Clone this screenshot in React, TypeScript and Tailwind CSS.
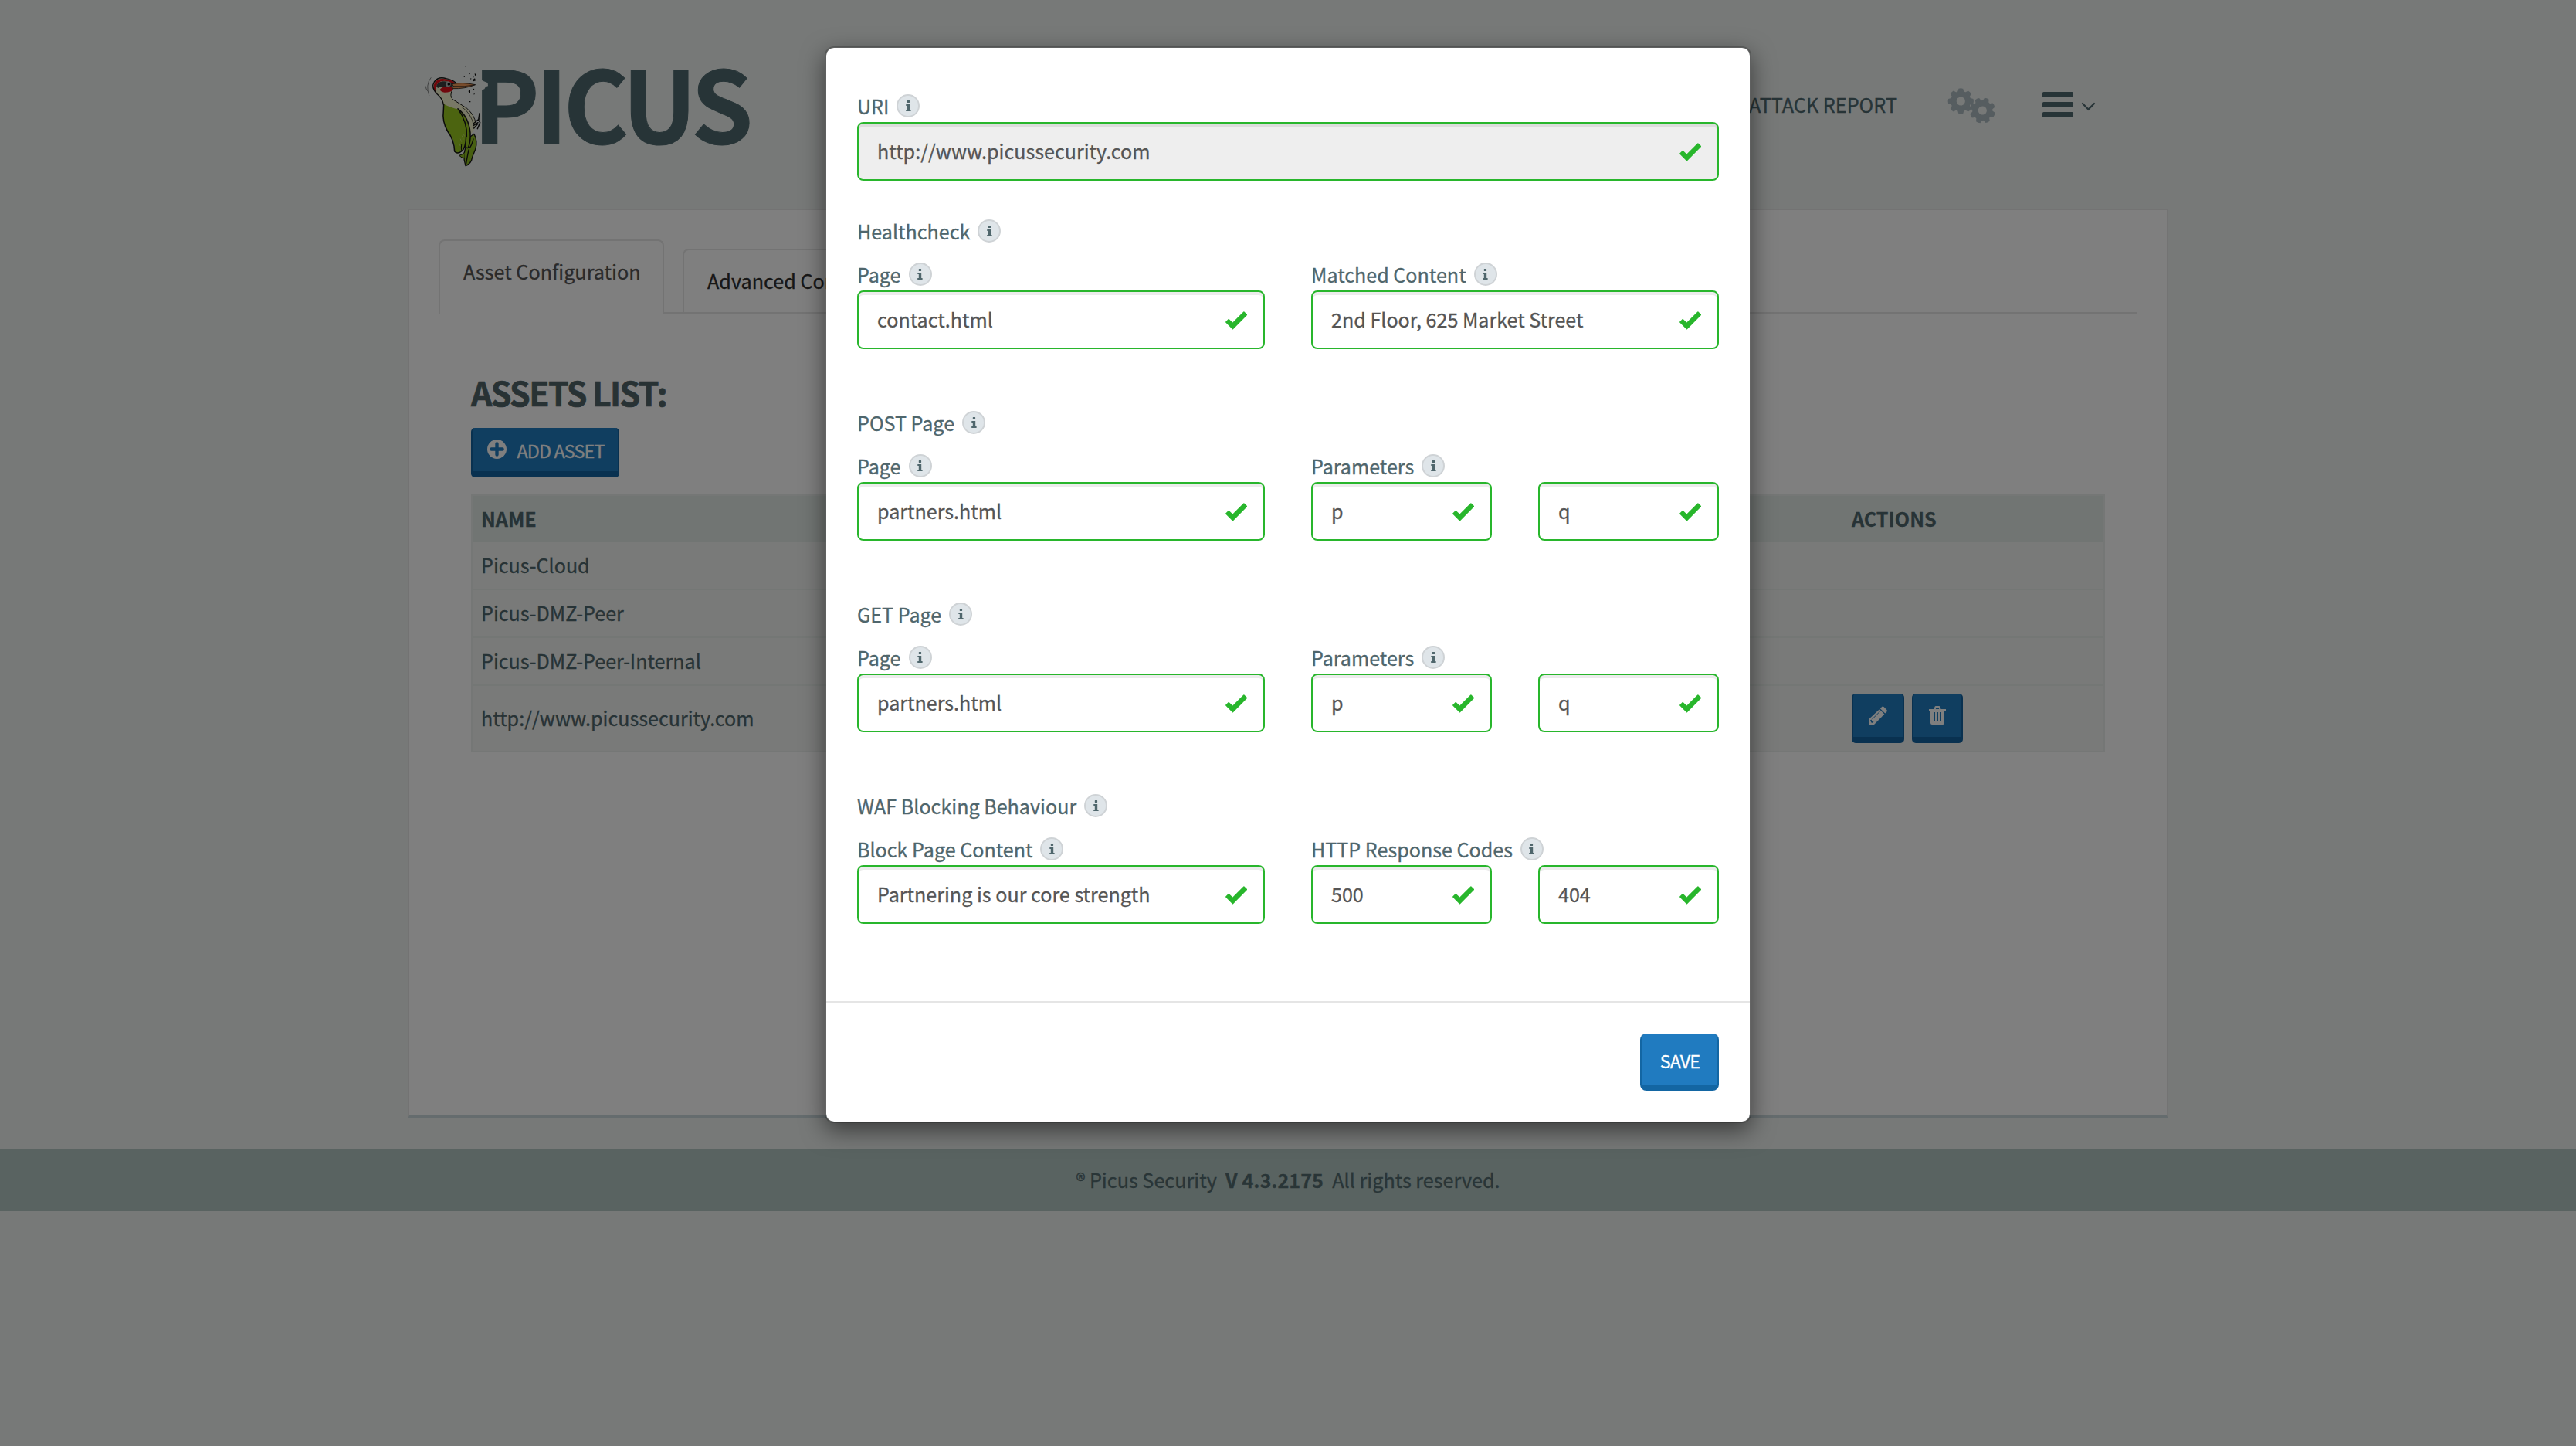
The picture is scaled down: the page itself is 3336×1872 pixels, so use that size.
import type { ReactNode } from 'react';

const GEAR_TEETH = [0, 45, 90, 135, 180, 225, 270, 315];

function Gear({ cx, cy, turn }: { cx: number; cy: number; turn: number }) {
  return (
    <g transform={`translate(${cx} ${cy}) rotate(${turn})`}>
      <circle r="9.3" fill="none" stroke="currentColor" strokeWidth="7.4" />
      {GEAR_TEETH.map((a) => (
        <path key={a} d="M-4.2 -11.5 L-2.9 -16.2 Q0 -17.1 2.9 -16.2 L4.2 -11.5 Z" fill="currentColor" transform={`rotate(${a})`} />
      ))}
    </g>
  );
}

function Woodpecker() {
  return (
    <svg viewBox="0 0 270 420" className="absolute top-0 left-0 h-[140px] w-[90px]" strokeLinecap="round" strokeLinejoin="round">
      <path d="M230 70 L234 70 L245 76 L260 82 L261 94 L252 97 L247 106 L239 109 L233 116 L228 116 Z" fill="#eef2f0" />
      <path d="M39 62 Q17 90 32 130 M19 96 Q20 106 25 112" fill="none" stroke="#222" strokeWidth="1.6" />
      <path d="M207 280 Q222 310 212 340 L200 370 Q196 396 174 404 Q166 380 168 358 L180 300 Z" fill="#8fbe22" stroke="#141414" strokeWidth="4" />
      <path d="M170 352 Q160 362 149 364 Q158 374 169 374" fill="#8fbe22" stroke="#141414" strokeWidth="3" />
      <path d="M188 335 Q196 330 204 300 M186 342 Q180 370 176 395" fill="none" stroke="#141414" strokeWidth="4" />
      <path d="M60 116 Q84 140 88 162 L92 178 Q140 186 164 210 Q186 240 192 282 Q208 270 214 244 Q208 205 178 180 Q150 162 124 146 Q112 132 122 112 L104 70 L62 84 Z" fill="#f2f2cc" />
      <path d="M214 240 Q208 205 178 180 Q150 162 124 146 Q110 132 122 110" fill="none" stroke="#141414" strokeWidth="3" />
      <path d="M160 176 Q196 200 206 248" fill="none" stroke="#141414" strokeWidth="2" />
      <path d="M89 164 Q120 180 146 184 Q178 206 190 262 Q196 300 186 334 Q174 334 176 306 Q172 336 158 348 Q142 362 131 350 Q134 320 122 298 Q94 262 86 220 Z" fill="#98c820" />
      <path d="M89 164 L88 188 Q82 232 104 270 Q130 304 131 348 Q142 360 158 348 Q174 336 176 290 M146 184 Q186 214 192 276 Q194 310 184 334 Q172 338 174 316 M144 182 Q182 236 178 292" fill="none" stroke="#141414" strokeWidth="4.5" />
      <path d="M158 346 Q156 332 158 322" fill="none" stroke="#141414" strokeWidth="3" />
      <path d="M154 300 L158 310 M160 288 L165 300 M150 318 L153 326 M166 280 L169 288" fill="none" stroke="#dbe89a" strokeWidth="1.6" />
      <path d="M88 166 Q84 142 66 128 Q42 100 50 82 Q64 58 96 66 Q122 70 134 84 L122 100 Q108 112 92 106 Q76 104 62 92 Q58 104 68 124 Z" fill="#f2f2cc" />
      <path d="M58 122 Q44 98 54 80 Q66 62 96 67 Q120 70 134 82 L124 84 Q100 70 78 76 Q58 84 58 108 Z" fill="#e01018" />
      <path d="M60 94 Q66 78 84 76 Q108 74 126 84 L122 96 L100 98 Q80 92 66 102 Z" fill="#3c3c3c" />
      <path d="M74 108 Q82 96 104 98 Q124 96 126 108 Q118 119 92 119 Q78 118 74 108 Z" fill="#e01018" />
      <circle cx="106" cy="87" r="10" fill="#b8b8b8" />
      <circle cx="109" cy="87" r="5.5" fill="#0a0a0a" />
      <path d="M122 86 Q160 78 212 89 Q170 106 122 104 Q130 94 122 86 Z" fill="#f09858" stroke="#141414" strokeWidth="2.4" />
      <path d="M126 95 Q170 98 208 90" fill="none" stroke="#141414" strokeWidth="2" />
      <path d="M88 166 Q84 142 64 126 Q38 100 52 78 Q68 56 98 65 Q122 69 136 82" fill="none" stroke="#141414" strokeWidth="4" />
      <path d="M228 200 L224 226 L230 236 L220 260 M226 222 L204 240 M222 236 L204 248 M220 242 L206 258" fill="none" stroke="#141414" strokeWidth="4.5" />
      <path d="M202 70 l8 -6 l3 9 l-9 3 z M184 114 l8 -4 v12 z M209 46 l5 1 l1 6 l-5 0 z M206 122 l4 3 l-4 3 z M204 60 l2 -2 l1 3 z M188 44 l4 2 l-3 3 z M192 64 l5 1 l-3 4 z M211 30 h4 v3 h-4 z M171 15 h3 v4 h-3 z M167 56 h4 v3 h-4 z M189 153 h4 v4 h-4 z M202 104 l6 1 l-3 5 z" fill="#080808" />
    </svg>
  );
}

function InfoBadge() {
  return (
    <span className="flex size-[30px] shrink-0 items-center justify-center rounded-full border-2 border-[#cfd3d6] bg-[#dfe5e9]">
      <svg viewBox="0 0 7 14" className="h-[14px] w-[7px]" fill="#4f666c">
        <path d="M1.8 .4 Q1.8 0 2.2 0 H4.7 Q5.1 0 5.1 .4 V2.6 Q5.1 3 4.7 3 H2.2 Q1.8 3 1.8 2.6 Z M.3 5 H5.2 V12 H6.6 V14 H.2 V12 H1.8 V7 H.3 Z" />
      </svg>
    </span>
  );
}

function Label({ children }: { children: ReactNode }) {
  return (
    <div className="flex h-[30px] items-center gap-2.5 text-[25.1px] leading-[30px] text-[#4f666c]">
      <span className="whitespace-nowrap">{children}</span>
      <InfoBadge />
    </div>
  );
}

function Field({ value, disabled }: { value: string; disabled?: boolean }) {
  return (
    <div
      className={
        'flex h-[76px] min-w-0 flex-1 items-center justify-between rounded-lg border-2 border-[#28b62c] pr-[21px] pl-6 shadow-[inset_0_4px_0_rgba(0,0,0,0.075)] ' +
        (disabled ? 'bg-[#eeeeee]' : 'bg-white')
      }
    >
      <span className="pb-[3px] text-[25.1px] leading-[36px] whitespace-nowrap text-[#555555]">{value}</span>
      <svg viewBox="0 0 28.4 24" className="mt-0.5 h-6 w-[28.4px] shrink-0" fill="#28b62c">
        <path d="M0.3 13.4 L3.8 9.9 Q4.2 9.5 4.6 9.9 L9.3 14.6 L23.4 .5 Q23.9 0 24.4 .5 L28 4.1 Q28.4 4.5 28 4.9 L10 23.3 Q9.5 23.8 9 23.3 L.3 14.4 Q-.1 13.9 .3 13.4 Z" />
      </svg>
    </div>
  );
}

type Group = { title: string; left: [string, string]; right: [string, string[]] };

const GROUPS: Group[] = [
  { title: 'Healthcheck', left: ['Page', 'contact.html'], right: ['Matched Content', ['2nd Floor, 625 Market Street']] },
  { title: 'POST Page', left: ['Page', 'partners.html'], right: ['Parameters', ['p', 'q']] },
  { title: 'GET Page', left: ['Page', 'partners.html'], right: ['Parameters', ['p', 'q']] },
  { title: 'WAF Blocking Behaviour', left: ['Block Page Content', 'Partnering is our core strength'], right: ['HTTP Response Codes', ['500', '404']] },
];

function Modal() {
  return (
    <div className="absolute inset-0 flex items-start justify-center bg-black/50 pt-[60px]">
      <div className="w-[1200px] rounded-[12px] border-2 border-black/20 bg-white bg-clip-padding shadow-[0_10px_30px_rgba(0,0,0,0.5)]">
        <div className="flex h-[1234px] flex-col px-10 pt-[60px]">
          <Label>URI</Label>
          <div className="mt-1.5 flex">
            <Field value="http://www.picussecurity.com" disabled />
          </div>
          <div className="mt-[50px] flex flex-col gap-20">
            {GROUPS.map((g) => (
              <div key={g.title}>
                <Label>{g.title}</Label>
                <div className="mt-[26px] grid grid-cols-2 gap-[60px]">
                  <div>
                    <Label>{g.left[0]}</Label>
                    <div className="mt-1.5 flex">
                      <Field value={g.left[1]} />
                    </div>
                  </div>
                  <div>
                    <Label>{g.right[0]}</Label>
                    <div className="mt-1.5 flex gap-[60px]">
                      {g.right[1].map((v) => (
                        <Field key={v} value={v} />
                      ))}
                    </div>
                  </div>
                </div>
              </div>
            ))}
          </div>
        </div>
        <div className="flex justify-end border-t-2 border-[#e5e5e5] p-10">
          <button className="flex h-[74px] w-[102px] items-center justify-center rounded-lg border-x-2 border-b-8 border-[#1366a3] bg-[#207bc0] pt-[3px] pl-px text-[23.4px] leading-[34px] tracking-[-0.9px] text-white">
            SAVE
          </button>
        </div>
      </div>
    </div>
  );
}

function Header() {
  return (
    <header className="mx-auto flex h-[270px] w-[2280px] justify-between">
      <div className="relative mt-20 ml-[17px] h-[140px] w-[440px]">
        <div className="pl-[68px] text-[128.6px] leading-[100px] font-bold tracking-[-5.7px] whitespace-nowrap text-[#4f696f] [-webkit-text-stroke:1px_#4f696f]">
          PICUS
        </div>
        <Woodpecker />
      </div>
      <nav className="box-content flex h-[60px] items-center pt-[105px] pr-[88px] text-[#4f696f]">
        <span className="text-[25.2px] leading-[36px] whitespace-nowrap">ATTACK REPORT</span>
        <svg viewBox="0 0 210 60" className="ml-[53px] h-[60px] w-[210px]">
          <g className="text-[#acbac0]">
            <Gear cx={29.3} cy={26} turn={0} />
            <Gear cx={57.3} cy={38} turn={20} />
          </g>
          <g fill="currentColor">
            <rect x="135" y="14" width="40" height="7" rx="1.5" />
            <rect x="135" y="27" width="40" height="7" rx="1.5" />
            <rect x="135" y="40" width="40" height="7" rx="1.5" />
          </g>
          <path d="M187 29 L194.5 36.6 L202 29" fill="none" stroke="currentColor" strokeWidth="2.2" strokeLinecap="round" />
        </svg>
      </nav>
    </header>
  );
}

const iconButton = 'flex h-16 items-center justify-center rounded-[5px] border-x-2 border-b-8 border-[#1262a0] bg-[#207cc0] ';

function PencilIcon() {
  return (
    <svg viewBox="0 0 24 24" className="size-6" fill="#fff">
      <path d="M16.6 1.4 Q18.2 -.3 19.8 1.3 L23.2 4.8 Q24.6 6.4 23 7.9 L21.3 9.6 L14.9 3.2 Z" />
      <path d="M13.9 4.2 L20.3 10.6 L7 23.9 H0 V17.2 Z" />
      <path d="M14.2 7.4 L4.6 17" stroke="#207cc0" strokeWidth="1" />
      <path d="M2 18.4 L3.6 17.4 L4.2 19.4 L6.4 20 L5.6 22 L3.4 21.4 Z" fill="#207cc0" />
    </svg>
  );
}

function TrashIcon() {
  return (
    <svg viewBox="0 0 22 24" className="h-6 w-[22px]" fill="#fff">
      <path d="M6.5 4 L7.5 1 Q7.9 0 9 0 H13 Q14.1 0 14.5 1 L15.5 4 H22 V6 H20 V22 Q20 24 18 24 H4 Q2 24 2 22 V6 H0 V4 Z M8.8 4 H13.2 L12.7 2 H9.3 Z" fillRule="evenodd" />
      <path d="M6 8 H8 V20 H6 Z M10 8 H12 V20 H10 Z M14 8 H16 V20 H14 Z" fill="#207cc0" />
    </svg>
  );
}

const ASSETS = ['Picus-Cloud', 'Picus-DMZ-Peer', 'Picus-DMZ-Peer-Internal'];

function Panel() {
  return (
    <main className="mx-auto h-[1178px] w-[2280px] border-2 border-b-4 border-[#e7e7e7] border-b-[#cbd9dd] bg-white px-[38px] pt-[38px]">
      <div className="flex h-24 items-end gap-6 border-b-2 border-[#e6e6e6] text-[25.2px] leading-[40px] whitespace-nowrap">
        <div className="-mb-0.5 h-24 w-[292px] rounded-t-lg border-2 border-b-0 border-[#e6e6e6] bg-white pt-[19px] pl-[30px] text-[#555555]">
          Asset Configuration
        </div>
        <div className="h-[82px] w-[340px] rounded-t-lg border-2 border-b-0 border-[#e6e6e6] pt-[19px] pl-[30px] text-[#2e2e2e]">
          Advanced Configuration
        </div>
      </div>
      <section className="px-[42px] pt-[77px]">
        <h2 className="text-[42.8px] leading-[48px] font-bold tracking-[-1.6px] whitespace-nowrap text-[#506468] [-webkit-text-stroke:0.7px_#506468]">
          ASSETS LIST:
        </h2>
        <button className={iconButton + 'mt-[23px] w-48 gap-[13px] pl-0.5 text-[23.4px] leading-[34px] tracking-[-0.9px] whitespace-nowrap text-white'}>
          <svg viewBox="0 0 24 24" className="mb-px size-[25px]">
            <circle cx="12" cy="12" r="12" fill="#fff" />
            <path d="M12 5.2 V18.8 M5.2 12 H18.8" stroke="#207cc0" strokeWidth="4.2" strokeLinecap="round" />
          </svg>
          <span className="pt-px">ADD ASSET</span>
        </button>
        <div className="mt-[22px] border-2 border-[#eaefed] text-[25.1px] text-[#4f666c]">
          <div className="flex h-[60px] items-center bg-[#e2ebe7] pl-[11px] font-bold">
            <span className="w-[1775px]">NAME</span>
            <span>ACTIONS</span>
          </div>
          {ASSETS.map((name) => (
            <div key={name} className="box-content flex h-[60px] items-center border-b-2 border-[#e8eeeb] bg-[#f2f5f2]">
              <span className="pl-[11px]">{name}</span>
            </div>
          ))}
          <div className="flex h-[84px] items-center bg-[#f2f5f2] pl-[11px]">
            <span className="w-[1775px]">http://www.picussecurity.com</span>
            <div className="flex gap-2.5">
              <button className={iconButton + 'w-[68px]'}>
                <PencilIcon />
              </button>
              <button className={iconButton + 'w-[66px]'}>
                <TrashIcon />
              </button>
            </div>
          </div>
        </div>
      </section>
    </main>
  );
}

export default function App() {
  return (
    <div className="relative min-h-[1872px] w-full bg-[#eef2f0] font-['Noto_Sans_CJK_SC',sans-serif] [-webkit-text-stroke:0.3px]">
      <Header />
      <Panel />
      <footer className="mt-10 flex h-20 items-center justify-center bg-[#b2c6c2] pb-[3px] text-[25.2px] leading-[36px] whitespace-pre text-[#526a6e]">
        <span>® Picus Security  </span>
        <span className="font-bold">V 4.3.2175</span>
        <span>  All rights reserved.</span>
      </footer>
      <Modal />
    </div>
  );
}
